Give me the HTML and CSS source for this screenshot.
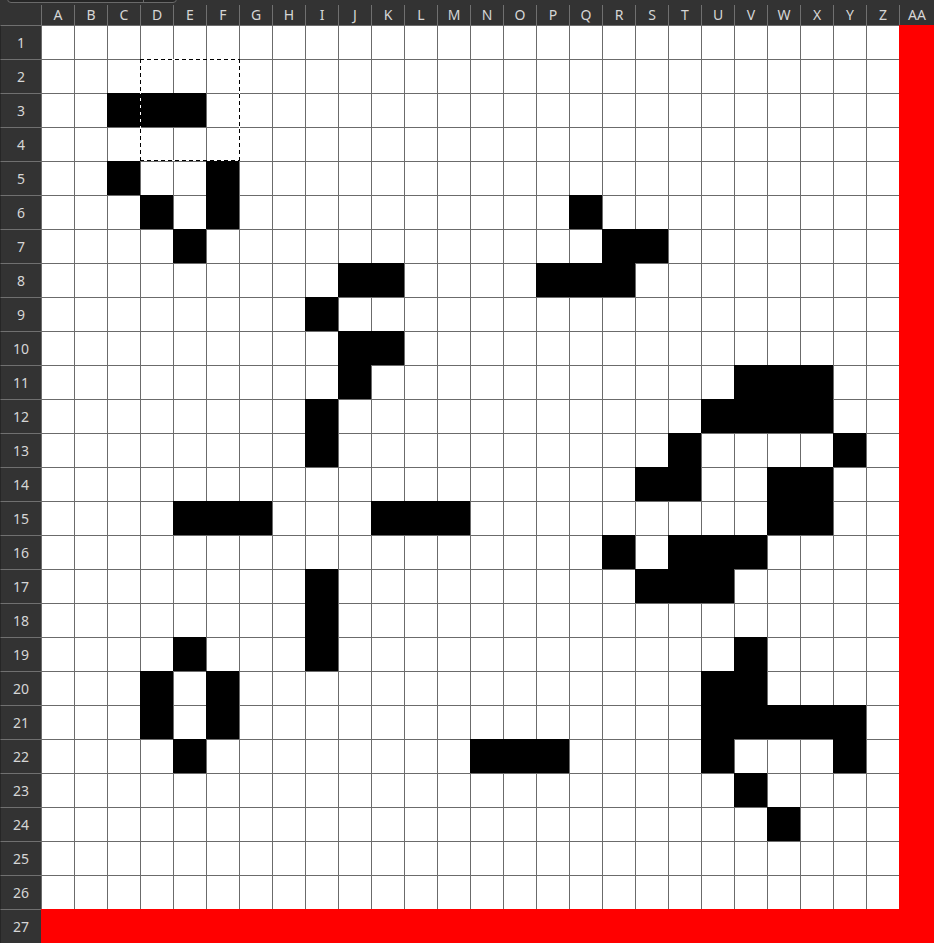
FILE: index.html
```html
<!DOCTYPE html>
<html>
<head>
<meta charset="utf-8">
<title>Sheet</title>
<link rel="stylesheet" href="styles.css">
</head>
<body>
<div class="topbar"><span class="field"></span><span class="btn"></span></div>
<div class="sheet">
<div class="corner"></div>
<div class="ch">A</div><div class="ch">B</div><div class="ch">C</div><div class="ch">D</div><div class="ch">E</div><div class="ch">F</div><div class="ch">G</div><div class="ch">H</div><div class="ch">I</div><div class="ch">J</div><div class="ch">K</div><div class="ch">L</div><div class="ch">M</div><div class="ch">N</div><div class="ch">O</div><div class="ch">P</div><div class="ch">Q</div><div class="ch">R</div><div class="ch">S</div><div class="ch">T</div><div class="ch">U</div><div class="ch">V</div><div class="ch">W</div><div class="ch">X</div><div class="ch">Y</div><div class="ch">Z</div><div class="ch">AA</div>

<div class="rh">1</div><i></i><i></i><i></i><i></i><i></i> <i></i><i></i><i></i><i></i><i></i> <i></i><i></i><i></i><i></i><i></i> <i></i><i></i><i></i><i></i><i></i> <i></i><i></i><i></i><i></i><i></i> <i></i><i class="r"></i>
<div class="rh">2</div><i></i><i></i><i></i><i></i><i></i> <i></i><i></i><i></i><i></i><i></i> <i></i><i></i><i></i><i></i><i></i> <i></i><i></i><i></i><i></i><i></i> <i></i><i></i><i></i><i></i><i></i> <i></i><i class="r"></i>
<div class="rh">3</div><i></i><i></i><i class="b"></i><i class="b"></i><i class="b"></i> <i></i><i></i><i></i><i></i><i></i> <i></i><i></i><i></i><i></i><i></i> <i></i><i></i><i></i><i></i><i></i> <i></i><i></i><i></i><i></i><i></i> <i></i><i class="r"></i>
<div class="rh">4</div><i></i><i></i><i></i><i></i><i></i> <i></i><i></i><i></i><i></i><i></i> <i></i><i></i><i></i><i></i><i></i> <i></i><i></i><i></i><i></i><i></i> <i></i><i></i><i></i><i></i><i></i> <i></i><i class="r"></i>
<div class="rh">5</div><i></i><i></i><i class="b"></i><i></i><i></i> <i class="b"></i><i></i><i></i><i></i><i></i> <i></i><i></i><i></i><i></i><i></i> <i></i><i></i><i></i><i></i><i></i> <i></i><i></i><i></i><i></i><i></i> <i></i><i class="r"></i>
<div class="rh">6</div><i></i><i></i><i></i><i class="b"></i><i></i> <i class="b"></i><i></i><i></i><i></i><i></i> <i></i><i></i><i></i><i></i><i></i> <i></i><i class="b"></i><i></i><i></i><i></i> <i></i><i></i><i></i><i></i><i></i> <i></i><i class="r"></i>
<div class="rh">7</div><i></i><i></i><i></i><i></i><i class="b"></i> <i></i><i></i><i></i><i></i><i></i> <i></i><i></i><i></i><i></i><i></i> <i></i><i></i><i class="b"></i><i class="b"></i><i></i> <i></i><i></i><i></i><i></i><i></i> <i></i><i class="r"></i>
<div class="rh">8</div><i></i><i></i><i></i><i></i><i></i> <i></i><i></i><i></i><i></i><i class="b"></i> <i class="b"></i><i></i><i></i><i></i><i></i> <i class="b"></i><i class="b"></i><i class="b"></i><i></i><i></i> <i></i><i></i><i></i><i></i><i></i> <i></i><i class="r"></i>
<div class="rh">9</div><i></i><i></i><i></i><i></i><i></i> <i></i><i></i><i></i><i class="b"></i><i></i> <i></i><i></i><i></i><i></i><i></i> <i></i><i></i><i></i><i></i><i></i> <i></i><i></i><i></i><i></i><i></i> <i></i><i class="r"></i>
<div class="rh">10</div><i></i><i></i><i></i><i></i><i></i> <i></i><i></i><i></i><i></i><i class="b"></i> <i class="b"></i><i></i><i></i><i></i><i></i> <i></i><i></i><i></i><i></i><i></i> <i></i><i></i><i></i><i></i><i></i> <i></i><i class="r"></i>
<div class="rh">11</div><i></i><i></i><i></i><i></i><i></i> <i></i><i></i><i></i><i></i><i class="b"></i> <i></i><i></i><i></i><i></i><i></i> <i></i><i></i><i></i><i></i><i></i> <i></i><i class="b"></i><i class="b"></i><i class="b"></i><i></i> <i></i><i class="r"></i>
<div class="rh">12</div><i></i><i></i><i></i><i></i><i></i> <i></i><i></i><i></i><i class="b"></i><i></i> <i></i><i></i><i></i><i></i><i></i> <i></i><i></i><i></i><i></i><i></i> <i class="b"></i><i class="b"></i><i class="b"></i><i class="b"></i><i></i> <i></i><i class="r"></i>
<div class="rh">13</div><i></i><i></i><i></i><i></i><i></i> <i></i><i></i><i></i><i class="b"></i><i></i> <i></i><i></i><i></i><i></i><i></i> <i></i><i></i><i></i><i></i><i class="b"></i> <i></i><i></i><i></i><i></i><i class="b"></i> <i></i><i class="r"></i>
<div class="rh">14</div><i></i><i></i><i></i><i></i><i></i> <i></i><i></i><i></i><i></i><i></i> <i></i><i></i><i></i><i></i><i></i> <i></i><i></i><i></i><i class="b"></i><i class="b"></i> <i></i><i></i><i class="b"></i><i class="b"></i><i></i> <i></i><i class="r"></i>
<div class="rh">15</div><i></i><i></i><i></i><i></i><i class="b"></i> <i class="b"></i><i class="b"></i><i></i><i></i><i></i> <i class="b"></i><i class="b"></i><i class="b"></i><i></i><i></i> <i></i><i></i><i></i><i></i><i></i> <i></i><i></i><i class="b"></i><i class="b"></i><i></i> <i></i><i class="r"></i>
<div class="rh">16</div><i></i><i></i><i></i><i></i><i></i> <i></i><i></i><i></i><i></i><i></i> <i></i><i></i><i></i><i></i><i></i> <i></i><i></i><i class="b"></i><i></i><i class="b"></i> <i class="b"></i><i class="b"></i><i></i><i></i><i></i> <i></i><i class="r"></i>
<div class="rh">17</div><i></i><i></i><i></i><i></i><i></i> <i></i><i></i><i></i><i class="b"></i><i></i> <i></i><i></i><i></i><i></i><i></i> <i></i><i></i><i></i><i class="b"></i><i class="b"></i> <i class="b"></i><i></i><i></i><i></i><i></i> <i></i><i class="r"></i>
<div class="rh">18</div><i></i><i></i><i></i><i></i><i></i> <i></i><i></i><i></i><i class="b"></i><i></i> <i></i><i></i><i></i><i></i><i></i> <i></i><i></i><i></i><i></i><i></i> <i></i><i></i><i></i><i></i><i></i> <i></i><i class="r"></i>
<div class="rh">19</div><i></i><i></i><i></i><i></i><i class="b"></i> <i></i><i></i><i></i><i class="b"></i><i></i> <i></i><i></i><i></i><i></i><i></i> <i></i><i></i><i></i><i></i><i></i> <i></i><i class="b"></i><i></i><i></i><i></i> <i></i><i class="r"></i>
<div class="rh">20</div><i></i><i></i><i></i><i class="b"></i><i></i> <i class="b"></i><i></i><i></i><i></i><i></i> <i></i><i></i><i></i><i></i><i></i> <i></i><i></i><i></i><i></i><i></i> <i class="b"></i><i class="b"></i><i></i><i></i><i></i> <i></i><i class="r"></i>
<div class="rh">21</div><i></i><i></i><i></i><i class="b"></i><i></i> <i class="b"></i><i></i><i></i><i></i><i></i> <i></i><i></i><i></i><i></i><i></i> <i></i><i></i><i></i><i></i><i></i> <i class="b"></i><i class="b"></i><i class="b"></i><i class="b"></i><i class="b"></i> <i></i><i class="r"></i>
<div class="rh">22</div><i></i><i></i><i></i><i></i><i class="b"></i> <i></i><i></i><i></i><i></i><i></i> <i></i><i></i><i></i><i class="b"></i><i class="b"></i> <i class="b"></i><i></i><i></i><i></i><i></i> <i class="b"></i><i></i><i></i><i></i><i class="b"></i> <i></i><i class="r"></i>
<div class="rh">23</div><i></i><i></i><i></i><i></i><i></i> <i></i><i></i><i></i><i></i><i></i> <i></i><i></i><i></i><i></i><i></i> <i></i><i></i><i></i><i></i><i></i> <i></i><i class="b"></i><i></i><i></i><i></i> <i></i><i class="r"></i>
<div class="rh">24</div><i></i><i></i><i></i><i></i><i></i> <i></i><i></i><i></i><i></i><i></i> <i></i><i></i><i></i><i></i><i></i> <i></i><i></i><i></i><i></i><i></i> <i></i><i></i><i class="b"></i><i></i><i></i> <i></i><i class="r"></i>
<div class="rh">25</div><i></i><i></i><i></i><i></i><i></i> <i></i><i></i><i></i><i></i><i></i> <i></i><i></i><i></i><i></i><i></i> <i></i><i></i><i></i><i></i><i></i> <i></i><i></i><i></i><i></i><i></i> <i></i><i class="r"></i>
<div class="rh">26</div><i></i><i></i><i></i><i></i><i></i> <i></i><i></i><i></i><i></i><i></i> <i></i><i></i><i></i><i></i><i></i> <i></i><i></i><i></i><i></i><i></i> <i></i><i></i><i></i><i></i><i></i> <i></i><i class="r"></i>
<div class="rh">27</div><i class="r"></i><i class="r"></i><i class="r"></i><i class="r"></i><i class="r"></i> <i class="r"></i><i class="r"></i><i class="r"></i><i class="r"></i><i class="r"></i> <i class="r"></i><i class="r"></i><i class="r"></i><i class="r"></i><i class="r"></i> <i class="r"></i><i class="r"></i><i class="r"></i><i class="r"></i><i class="r"></i> <i class="r"></i><i class="r"></i><i class="r"></i><i class="r"></i><i class="r"></i> <i class="r"></i><i class="r"></i>

<div class="sel"></div>
</div>
</body>
</html>
```

FILE: styles.css
```css
html, body {
  margin: 0;
  padding: 0;
  background: #333333;
  overflow: hidden;
}

body {
  font-family: "Noto Sans", "Open Sans", sans-serif;
  position: relative;
}

.topbar {
  position: absolute;
  top: -8px;
  left: 7px;
  width: 168px;
  height: 9px;
  border: 1px solid #6a6a6a;
  border-radius: 4px;
  background: #262626;
  display: flex;
  z-index: 2;
}

.topbar .field {
  width: 135px;
  border-right: 1px solid #6a6a6a;
}

.sheet {
  position: relative;
  display: grid;
  grid-template-columns: 41px repeat(26, 33px) 35px;
  grid-template-rows: 25px repeat(27, 34px);
  background: #333333;
}

.corner {
  background: #333333;
}

.ch {
  margin-top: 5px;
  border-left: 1px solid #707070;
  color: #d6d6d6;
  font-size: 14px;
  line-height: 1;
  display: flex;
  align-items: center;
  justify-content: center;
}

.rh {
  border-top: 1px solid #707070;
  border-left: 1px solid #262626;
  color: #d6d6d6;
  font-size: 14px;
  line-height: 1;
  display: flex;
  align-items: center;
  justify-content: center;
}

.sheet > i {
  display: block;
  background: #ffffff;
  border-left: 1px solid #6b6b6b;
  border-top: 1px solid #6b6b6b;
}

.sheet > i.b {
  background: #000000;
  border-color: #000000;
}

.sheet > i.r {
  background: #ff0000;
  border-color: #ff0000;
}

.sel {
  position: absolute;
  grid-column: 5 / 8;
  grid-row: 3 / 6;
  top: 0;
  left: 0;
  right: -1px;
  bottom: 0;
  border: 1px solid #ffffff;
}

.sel::after {
  content: "";
  position: absolute;
  inset: -1px;
  background:
    repeating-linear-gradient(90deg, #000 0 4px, transparent 4px 7px) left top / 100% 1px no-repeat,
    repeating-linear-gradient(90deg, #000 0 4px, transparent 4px 7px) left bottom / 100% 1px no-repeat,
    repeating-linear-gradient(180deg, #000 0 4px, transparent 4px 7px) left top / 1px 100% no-repeat,
    repeating-linear-gradient(180deg, #000 0 4px, transparent 4px 7px) right top / 1px 100% no-repeat;
}
```
